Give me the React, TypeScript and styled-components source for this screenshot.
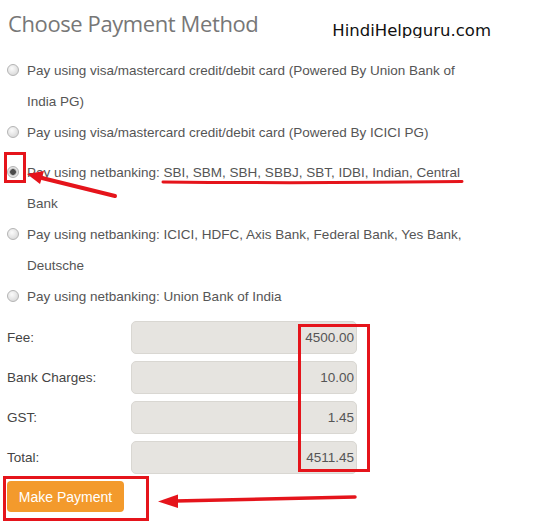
import styled, { createGlobalStyle } from 'styled-components';

const GlobalStyle = createGlobalStyle`
  html, body {
    margin: 0;
    padding: 0;
    background: #fff;
  }
  body {
    font-family: "Liberation Sans", Arial, sans-serif;
  }
`;

const options = [
  {
    label:
      'Pay using visa/mastercard credit/debit card (Powered By Union Bank of India PG)',
  },
  { label: 'Pay using visa/mastercard credit/debit card (Powered By ICICI PG)' },
  {
    label: 'Pay using netbanking: SBI, SBM, SBH, SBBJ, SBT, IDBI, Indian, Central Bank',
    checked: true,
    spaced: true,
  },
  {
    label:
      'Pay using netbanking: ICICI, HDFC, Axis Bank, Federal Bank, Yes Bank, Deutsche',
  },
  { label: 'Pay using netbanking: Union Bank of India' },
];

const charges = [
  { label: 'Fee:', value: '4500.00' },
  { label: 'Bank Charges:', value: '10.00' },
  { label: 'GST:', value: '1.45' },
  { label: 'Total:', value: '4511.45' },
];

const RED = '#e5141b';

const App = () => {
  return (
    <Page>
      <GlobalStyle />
      <Header>
        <Title>Choose Payment Method</Title>
        <Watermark>HindiHelpguru.com</Watermark>
      </Header>

      <OptionList>
        {options.map((opt, i) => (
          <Option key={i} $spaced={opt.spaced}>
            <Radio type="radio" name="pay" defaultChecked={opt.checked} />
            <OptionText>{opt.label}</OptionText>
          </Option>
        ))}
      </OptionList>

      <ChargeTable>
        {charges.map((c) => (
          <ChargeRow key={c.label}>
            <ChargeLabel>{c.label}</ChargeLabel>
            <ChargeField readOnly value={c.value} />
          </ChargeRow>
        ))}
      </ChargeTable>

      <PayButton>Make Payment</PayButton>

      <Annotations width="539" height="526" viewBox="0 0 539 526">
        <g stroke={RED} strokeWidth="3" fill="none">
          <rect x="5.5" y="153.5" width="19" height="28" />
          <rect x="299.5" y="325.5" width="69" height="145" />
          <rect x="4.5" y="477.5" width="143" height="42" />
          <path d="M163 182 Q 310 183.5 462 181.5" strokeLinecap="round" />
          <line x1="115" y1="196" x2="42" y2="178" strokeWidth="4" strokeLinecap="round" />
          <line x1="355" y1="497" x2="175" y2="501" strokeWidth="3.5" strokeLinecap="round" />
        </g>
        <g fill={RED}>
          <polygon points="27,174 44,171 40,184" />
          <polygon points="158,501.5 178,494.5 178,508" />
        </g>
      </Annotations>
    </Page>
  );
};

export default App;

const Page = styled.div`
  position: relative;
  width: 539px;
  height: 526px;
  padding: 0 7px;
  box-sizing: border-box;
  overflow: hidden;
`;

const Header = styled.div`
  display: flex;
  align-items: flex-start;
  height: 55px;
`;

const Title = styled.h2`
  margin: 8px 0 0 1px;
  font-family: "Open Sans", "Liberation Sans", sans-serif;
  font-weight: 400;
  font-size: 22px;
  letter-spacing: -0.4px;
  line-height: 30px;
  color: #777;
`;

const Watermark = styled.div`
  margin: 20px 41px 0 auto;
  height: 18px;
  overflow: hidden;
  font-family: "DejaVu Sans", sans-serif;
  font-size: 16.5px;
  line-height: 22px;
  color: #111;
`;

const OptionList = styled.div`
  display: flex;
  flex-direction: column;
`;

const Option = styled.label<{ $spaced?: boolean }>`
  display: flex;
  align-items: flex-start;
  margin-top: ${(p) => (p.$spaced ? '9px' : '0')};
  font-size: 13.5px;
  line-height: 31px;
  color: #555;
`;

const Radio = styled.input`
  appearance: none;
  flex: none;
  width: 12px;
  height: 12px;
  margin: 9px 8px 0 0;
  border-radius: 50%;
  border: 1px solid #b4b4b4;
  box-sizing: border-box;
  background: radial-gradient(circle at 40% 35%, #fbfbfb 0%, #e2e2e2 60%, #cfcfcf 100%);

  &:checked {
    background: radial-gradient(circle, #4a4a4a 0 2.5px, #9a9a9a 3px, #e6e6e6 4px, #d6d6d6 100%);
  }
`;

const OptionText = styled.span`
  width: 442px;
`;

const ChargeTable = styled.div`
  display: flex;
  flex-direction: column;
  gap: 7px;
  margin-top: 9px;
`;

const ChargeRow = styled.div`
  display: flex;
  align-items: center;
`;

const ChargeLabel = styled.span`
  width: 124px;
  font-size: 13.5px;
  color: #444;
`;

const ChargeField = styled.input`
  width: 226px;
  height: 33px;
  box-sizing: border-box;
  padding: 0 2px 0 6px;
  border: 1px solid #d9d7d2;
  border-radius: 5px;
  background: #e6e4e0;
  font-family: "Liberation Sans", Arial, sans-serif;
  font-size: 13.5px;
  color: #555;
  text-align: right;
  outline: none;
`;

const PayButton = styled.button`
  display: block;
  margin-top: 7px;
  width: 117px;
  height: 31px;
  border: none;
  border-radius: 4px;
  background: #f39a2c;
  color: #fff;
  font-family: "Liberation Sans", Arial, sans-serif;
  font-size: 14px;
  padding: 0;
`;

const Annotations = styled.svg`
  position: absolute;
  top: 0;
  left: 0;
  pointer-events: none;
`;
